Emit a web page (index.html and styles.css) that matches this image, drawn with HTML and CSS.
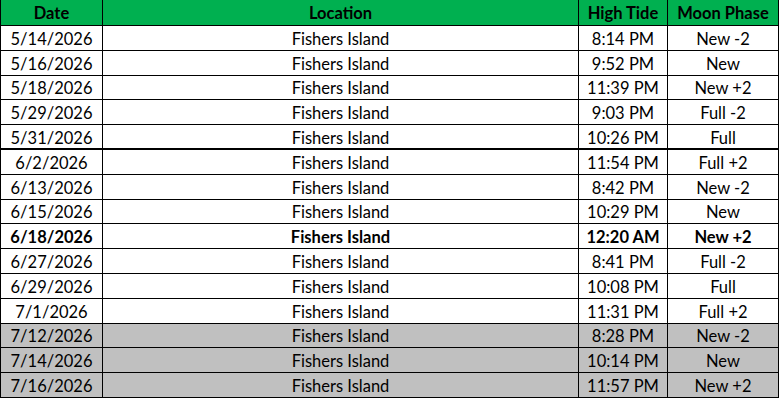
FILE: index.html
```html
<!DOCTYPE html>
<html>
<head>
<meta charset="utf-8">
<link rel="stylesheet" href="styles.css">
</head>
<body>
<table class="tides">
  <colgroup>
    <col class="c-date"><col class="c-loc"><col class="c-tide"><col class="c-moon">
  </colgroup>
  <thead>
    <tr class="head"><th>Date</th><th>Location</th><th>High Tide</th><th>Moon Phase</th></tr>
  </thead>
  <tbody>
    <tr><td>5/14/2026</td><td>Fishers Island</td><td>8:14 PM</td><td>New -2</td></tr>
    <tr><td>5/16/2026</td><td>Fishers Island</td><td>9:52 PM</td><td>New</td></tr>
    <tr><td>5/18/2026</td><td>Fishers Island</td><td>11:39 PM</td><td>New +2</td></tr>
    <tr><td>5/29/2026</td><td>Fishers Island</td><td>9:03 PM</td><td>Full -2</td></tr>
    <tr class="thick"><td>5/31/2026</td><td>Fishers Island</td><td>10:26 PM</td><td>Full</td></tr>
    <tr><td>6/2/2026</td><td>Fishers Island</td><td>11:54 PM</td><td>Full +2</td></tr>
    <tr><td>6/13/2026</td><td>Fishers Island</td><td>8:42 PM</td><td>New -2</td></tr>
    <tr><td>6/15/2026</td><td>Fishers Island</td><td>10:29 PM</td><td>New</td></tr>
    <tr class="bold"><td>6/18/2026</td><td>Fishers Island</td><td>12:20 AM</td><td>New +2</td></tr>
    <tr><td>6/27/2026</td><td>Fishers Island</td><td>8:41 PM</td><td>Full -2</td></tr>
    <tr><td>6/29/2026</td><td>Fishers Island</td><td>10:08 PM</td><td>Full</td></tr>
    <tr><td>7/1/2026</td><td>Fishers Island</td><td>11:31 PM</td><td>Full +2</td></tr>
    <tr class="grey"><td>7/12/2026</td><td>Fishers Island</td><td>8:28 PM</td><td>New -2</td></tr>
    <tr class="grey"><td>7/14/2026</td><td>Fishers Island</td><td>10:14 PM</td><td>New</td></tr>
    <tr class="grey"><td>7/16/2026</td><td>Fishers Island</td><td>11:57 PM</td><td>New +2</td></tr>
  </tbody>
</table>
</body>
</html>
```

FILE: styles.css
```css
html, body {
  margin: 0;
  padding: 0;
  background: #ffffff;
}

.tides {
  border-collapse: collapse;
  table-layout: fixed;
  width: 779px;
  font-family: Lato, "Liberation Sans", sans-serif;
  font-size: 16.5px;
  color: #000000;
}

.c-date { width: 102px; }
.c-loc { width: 476px; }
.c-tide { width: 89px; }
.c-moon { width: 111px; }

.tides tr {
  height: 24.8px;
}

.tides tr.head {
  height: 25.5px;
}

.tides th,
.tides td {
  border: 1px solid #000000;
  text-align: center;
  vertical-align: middle;
  padding: 0;
  line-height: 18px;
  white-space: nowrap;
}

.tides th {
  background: #00b050;
  font-weight: bold;
  border-top: none;
}

.tides td {
  padding-top: 2px;
}

.thick td {
  border-bottom: 2px solid #000000;
}

.bold td {
  font-weight: bold;
}

.grey td {
  background: #c0c0c0;
}
```
